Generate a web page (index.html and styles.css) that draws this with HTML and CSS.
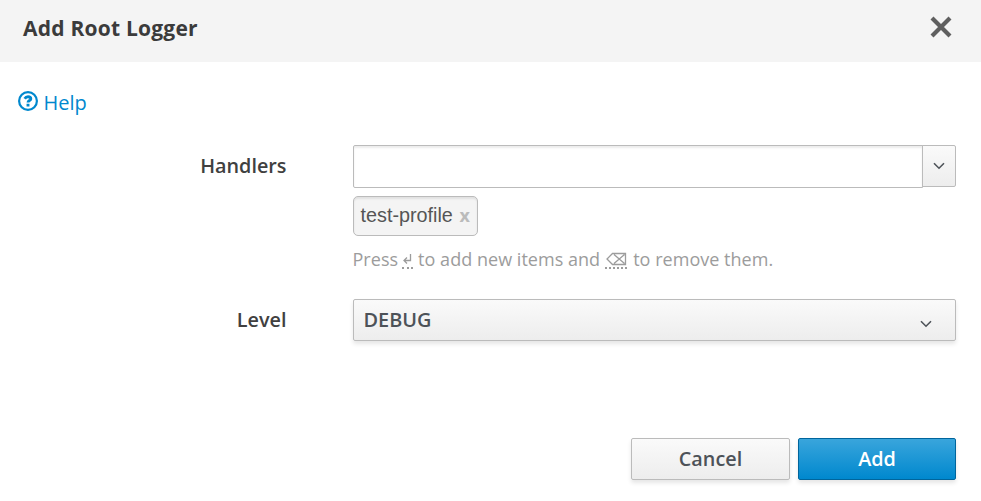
FILE: index.html
```html
<!DOCTYPE html>
<html lang="en">
<head>
<meta charset="utf-8">
<title>Add Root Logger</title>
<link rel="stylesheet" href="styles.css">
</head>
<body>
<div class="dialog">
  <header class="dialog-header">
    <h1 class="dialog-title">Add Root Logger</h1>
    <button class="close" aria-label="Close"><svg width="22" height="22" viewBox="0 0 22 22"><path d="M2 2L20 20M20 2L2 20"/></svg></button>
  </header>
  <main class="dialog-body">
    <a class="help"><svg class="help-icon" width="20" height="20" viewBox="0 0 20 20"><circle cx="10" cy="10" r="8.9"/><path class="mark" d="M6.7 7.7C7.5 6.4 8.6 5.8 10 5.8c1.7 0 2.8.8 2.8 2.1 0 1.8-2.8 1.6-2.8 3.6M10 12.8v2.7"/></svg><span class="help-text">Help</span></a>
    <div class="row handlers">
      <label class="label">Handlers</label>
      <div class="field">
        <div class="combo"><input class="combo-input" type="text" aria-label="Handlers"><button class="combo-toggle" aria-label="Show options"><svg width="12" height="8" viewBox="0 0 12 8"><path d="M1 1.2L6 6.2L11 1.2"/></svg></button></div>
        <div class="tag"><span class="tag-text">test-profile</span><span class="tag-remove">x</span></div>
        <p class="hint"><span>Press</span><span class="key enter"><svg width="11" height="12" viewBox="0 0 11 12"><path d="M8.5 0V6.5H2M5 3.5L2 6.5L5 9.5"/></svg></span><span class="hint-mid">to add new items and</span><span class="key erase"><svg width="22" height="14" viewBox="0 0 22 14"><path d="M7.5 1.5H20.5V12.5H7.5L2 7ZM9 2.5L19.5 11.5M19.5 2.5L9 11.5"/></svg></span><span class="hint-end">to remove them.</span></p>
      </div>
    </div>
    <div class="row level">
      <label class="label">Level</label>
      <div class="field select"><span class="select-text">DEBUG</span><svg width="12" height="8" viewBox="0 0 12 8"><path d="M1 1.2L6 6.2L11 1.2"/></svg></div>
    </div>
  </main>
  <footer class="actions">
    <button class="btn cancel"><span>Cancel</span></button>
    <button class="btn add"><span>Add</span></button>
  </footer>
</div>
</body>
</html>
```
FILE: styles.css
```css
* { box-sizing: border-box; }
body { margin: 0; background: #fff; color: #363636; font: 20px/28px "Open Sans", sans-serif; }
button { font: inherit; padding: 0; }
svg { display: block; fill: none; stroke: currentColor; }
.dialog { height: 501px; display: flex; flex-direction: column; overflow: hidden; }
.dialog-header { height: 62px; background: #f4f4f4; display: flex; justify-content: space-between; padding: 14px 29px 0 23px; }
.dialog-title { margin: 0; color: #3b3b3b; font-size: 21px; line-height: 28px; font-weight: 700; letter-spacing: 0.22px; white-space: nowrap; }
.close { border: 0; background: none; color: #5f5f5f; width: 22px; height: 22px; margin-top: 2px; }
.close svg { stroke-width: 4.2; }
.dialog-body { padding: 27px 25px 0 18px; }
.help { display: flex; color: #0088ce; height: 28px; width: 100px; }
.help-icon { margin-top: 2px; stroke-width: 2.2; }
.help-icon .mark { stroke-width: 2.9; }
.help-text { margin-left: 5.5px; }
.row { display: flex; }
.handlers { margin-top: 28px; }
.label { width: 268.5px; text-align: right; color: #404040; font-size: 19.8px; font-weight: 600; padding-top: 7px; flex: none; }
.field { margin-left: 66.5px; width: 603px; flex: none; }
.combo { display: flex; height: 43px; }
.combo-input { width: 570px; height: 43px; border: 1px solid #bbb; border-radius: 2px 0 0 2px; box-shadow: inset 0 2px 2px rgba(3,3,3,.075); outline: 0; padding: 0 10px; font: inherit; }
.combo-toggle { width: 34px; height: 42px; margin-left: -1px; border: 1px solid #bbb; border-radius: 0 2px 2px 0; background: linear-gradient(#fafafa, #ededed); color: #4d5258; display: flex; align-items: center; justify-content: center; }
.combo-toggle svg, .select svg { stroke-width: 1.6; }
.tag { width: 125px; height: 40px; margin-top: 8px; border: 1px solid #bbb; border-radius: 5px; background: #f4f4f4; box-shadow: inset 0 2px 2px rgba(3,3,3,.08); display: flex; padding: 4px 6.5px; color: #555; font-family: "Liberation Sans", sans-serif; white-space: nowrap; }
.tag-text { width: 93px; font-size: 19.8px; }
.tag-remove { margin-left: 6px; color: #bbb; font: 700 18px/29px "Open Sans", sans-serif; }
.hint { margin: 9px 0 0 -0.5px; height: 28px; display: flex; color: #9c9c9c; font-size: 18px; letter-spacing: 0.03px; white-space: nowrap; }
.key { border-bottom: 2px dotted #9c9c9c; height: 24px; }
.key svg { stroke-width: 1.3; }
.enter { width: 11px; margin-left: 4px; padding-top: 9px; }
.erase { width: 22px; margin-left: 5px; padding-top: 7px; }
.hint-mid { margin-left: 5px; }
.hint-end { margin-left: 6px; }
.level { margin-top: 26px; }
.select { height: 42px; border: 1px solid #bbb; border-radius: 2px; background: linear-gradient(#fafafa, #ededed); box-shadow: 0 3px 4px rgba(3,3,3,.1); color: #4d5258; font-size: 19.9px; font-weight: 600; display: flex; justify-content: space-between; padding: 6px 23px 0 9.5px; }
.select svg { margin-top: 14px; }
.actions { display: flex; justify-content: flex-end; gap: 8px; margin-top: 97px; padding-right: 25px; }
.btn { height: 42px; border: 1px solid #bbb; border-radius: 2px; font-size: 19.8px; font-weight: 600; box-shadow: 0 3px 4px rgba(3,3,3,.1); }
.cancel { width: 159px; color: #4d5258; background: linear-gradient(#fafafa, #ededed); }
.add { width: 158px; color: #fff; border-color: #00659c; background: linear-gradient(#39a5dc, #0088ce); }
```
